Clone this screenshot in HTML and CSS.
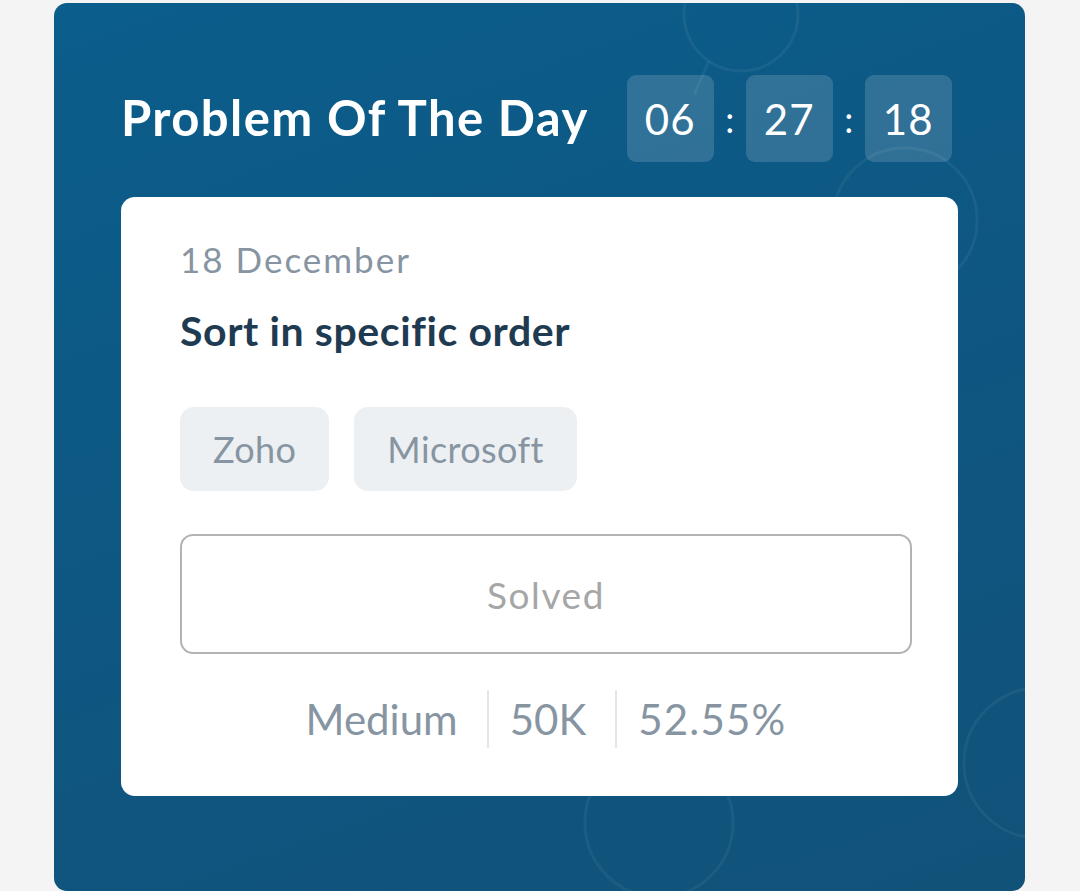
FILE: index.html
```html
<!DOCTYPE html>
<html lang="en">
<head>
<meta charset="utf-8">
<title>Problem Of The Day</title>
<link rel="stylesheet" href="styles.css">
</head>
<body>
<div class="page">
  <section class="potd">
    <svg class="potd-bg" width="971" height="888" viewBox="0 0 971 888" aria-hidden="true">
      <g fill="none" stroke="rgba(255,255,255,0.055)" stroke-width="3">
        <circle cx="687" cy="11" r="57"/>
        <circle cx="851" cy="217" r="72"/>
        <circle cx="605" cy="820" r="74"/>
        <circle cx="985" cy="760" r="75"/>
        <line x1="655" y1="58" x2="640" y2="92"/>
      </g>
    </svg>
    <header class="potd-head">
      <h1 class="potd-title">Problem Of The Day</h1>
      <div class="timer">
        <span class="timer-box">06</span>
        <span class="timer-sep">:</span>
        <span class="timer-box">27</span>
        <span class="timer-sep">:</span>
        <span class="timer-box">18</span>
      </div>
    </header>
    <article class="problem">
      <div class="problem-date">18 December</div>
      <h2 class="problem-name">Sort in specific order</h2>
      <div class="tags">
        <span class="tag">Zoho</span>
        <span class="tag">Microsoft</span>
      </div>
      <button class="solved-btn" type="button">Solved</button>
      <div class="stats">
        <span class="stat">Medium</span>
        <span class="stat">50K</span>
        <span class="stat">52.55%</span>
      </div>
    </article>
  </section>
</div>
</body>
</html>
```

FILE: styles.css
```css
* { box-sizing: border-box; }

html, body {
  margin: 0;
  padding: 0;
  background: #f4f4f4;
  overflow: hidden;
}

.page {
  padding: 3px 55px 0 54px;
  height: 891px;
}

.potd {
  position: relative;
  width: 971px;
  height: 888px;
  border-radius: 13px;
  background: linear-gradient(160deg, #0b5d8b 0%, #0e5782 50%, #115279 100%);
  overflow: hidden;
  padding: 70px 67px 0 67px;
}

.potd-bg {
  position: absolute;
  left: 0;
  top: 0;
  pointer-events: none;
}

.potd-head {
  position: relative;
  display: flex;
  align-items: center;
  gap: 38px;
  height: 87px;
  margin-top: 2px;
}

.potd-title {
  margin: -3px 0 0 0;
  font-family: "Lato", "Open Sans", sans-serif;
  font-weight: 700;
  font-size: 49px;
  color: #ffffff;
  letter-spacing: 1.4px;
  white-space: nowrap;
}

.timer {
  display: flex;
  align-items: center;
}

.timer-box {
  width: 87px;
  height: 87px;
  border-radius: 9px;
  background: rgba(255, 255, 255, 0.15);
  color: #ffffff;
  display: flex;
  align-items: center;
  justify-content: center;
  font-family: "Lato", "Open Sans", sans-serif;
  font-size: 42px;
  font-weight: 400;
  letter-spacing: 1px;
}

.timer-sep {
  width: 32px;
  text-align: center;
  color: #ffffff;
  font-family: "Lato", sans-serif;
  font-size: 36px;
}

.problem {
  position: relative;
  margin-top: 35px;
  width: 837px;
  height: 599px;
  background: #ffffff;
  border-radius: 14px;
  padding: 40px 46px 0 59px;
}

.problem-date {
  font-family: "Lato", "Open Sans", sans-serif;
  font-size: 35px;
  line-height: 44px;
  color: #8795a2;
  letter-spacing: 2px;
}

.problem-name {
  margin: 26px 0 0 0;
  font-family: "Lato", "Open Sans", sans-serif;
  font-weight: 700;
  font-size: 41px;
  line-height: 48px;
  color: #1f3b51;
  letter-spacing: 0.6px;
}

.tags {
  display: flex;
  gap: 25px;
  margin-top: 52px;
}

.tag {
  height: 84px;
  padding: 0 33px;
  border-radius: 14px;
  background: #edf0f3;
  color: #8795a2;
  font-family: "Lato", "Open Sans", sans-serif;
  font-size: 36px;
  letter-spacing: 0.4px;
  display: flex;
  align-items: center;
}

.solved-btn {
  display: block;
  margin-top: 43px;
  width: 732px;
  height: 120px;
  border: 2px solid #b3b3b3;
  border-radius: 13px;
  background: #ffffff;
  color: #a6a6a6;
  font-family: "Lato", "Open Sans", sans-serif;
  font-size: 37px;
  letter-spacing: 1.6px;
  padding: 0;
}

.stats {
  display: flex;
  justify-content: center;
  margin-top: 36px;
  width: 732px;
}

.stat {
  height: 58px;
  display: flex;
  align-items: center;
  padding: 0 29px 0 21px;
  font-family: "Lato", "Open Sans", sans-serif;
  font-size: 42px;
  color: #8795a2;
}

.stat:first-child {
  padding-left: 0;
}

.stat:last-child {
  padding-right: 0;
  letter-spacing: 1.2px;
}

.stat + .stat {
  border-left: 2px solid #e1e7ec;
}
```
